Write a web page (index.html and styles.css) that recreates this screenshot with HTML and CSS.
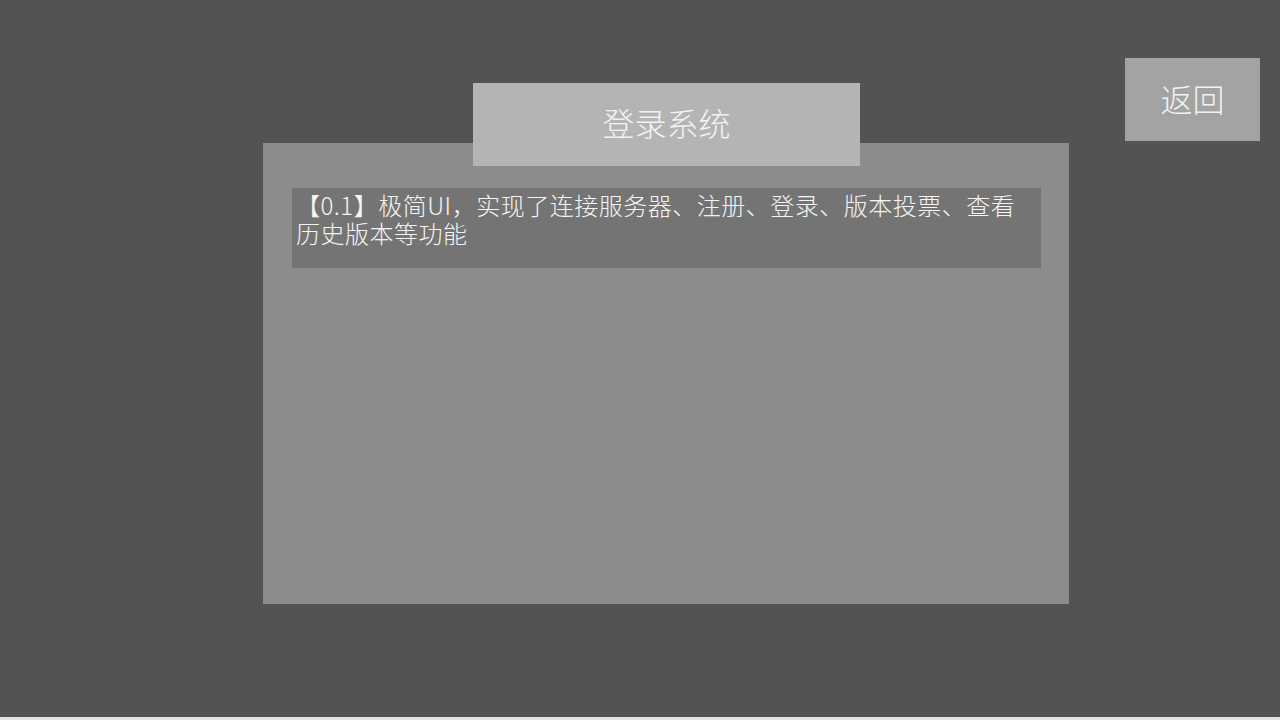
FILE: index.html
```html
<!DOCTYPE html>
<html lang="zh-CN">
<head>
    <meta charset="UTF-8">
    <title>登录系统</title>
    <link rel="stylesheet" href="styles.css">
</head>
<body>
    <div class="screen">
        <div class="main-column">
            <div class="title-box">登录系统</div>
            <div class="panel">
                <div class="version-note">【0.1】极简UI，实现了连接服务器、注册、登录、版本投票、查看历史版本等功能</div>
            </div>
        </div>
        <button class="back-btn">返回</button>
    </div>
</body>
</html>
```

FILE: styles.css
```css
html, body {
    margin: 0;
    padding: 0;
}
body {
    width: 1280px;
    height: 720px;
    background-color: #e4e4e4;
    font-family: "Noto Sans CJK SC", "Noto Sans", sans-serif;
    overflow: hidden;
}
.screen {
    display: flex;
    align-items: flex-start;
    width: 1280px;
    height: 717px;
    background-color: #535353;
}
.main-column {
    display: flex;
    flex-direction: column;
    width: 806px;
    margin-left: 263px;
    margin-top: 83px;
}
.title-box {
    position: relative;
    z-index: 1;
    align-self: center;
    width: 387px;
    height: 83px;
    margin-left: 1px;
    padding-bottom: 5px;
    box-sizing: border-box;
    display: flex;
    align-items: center;
    justify-content: center;
    background-color: #b4b4b4;
    color: #f2f2f2;
    font-size: 32px;
    font-weight: 300;
    line-height: 1;
}
.panel {
    height: 461px;
    margin-top: -23px;
    padding: 45px 0 0 29px;
    box-sizing: border-box;
    background-color: #8c8c8c;
}
.version-note {
    width: 749px;
    height: 80px;
    box-sizing: border-box;
    padding: 3px 4px 0 4px;
    background-color: #747474;
    color: #f4f4f4;
    font-size: 24px;
    font-weight: 300;
    letter-spacing: 0.5px;
    line-height: 28px;
}
.back-btn {
    width: 135px;
    height: 83px;
    margin-left: auto;
    margin-right: 20px;
    margin-top: 58px;
    border: none;
    padding: 0 0 4px 0;
    background-color: #a3a3a3;
    color: #f2f2f2;
    font-family: "Noto Sans CJK SC", "Noto Sans", sans-serif;
    font-size: 32px;
    font-weight: 300;
    line-height: 1;
}
```
